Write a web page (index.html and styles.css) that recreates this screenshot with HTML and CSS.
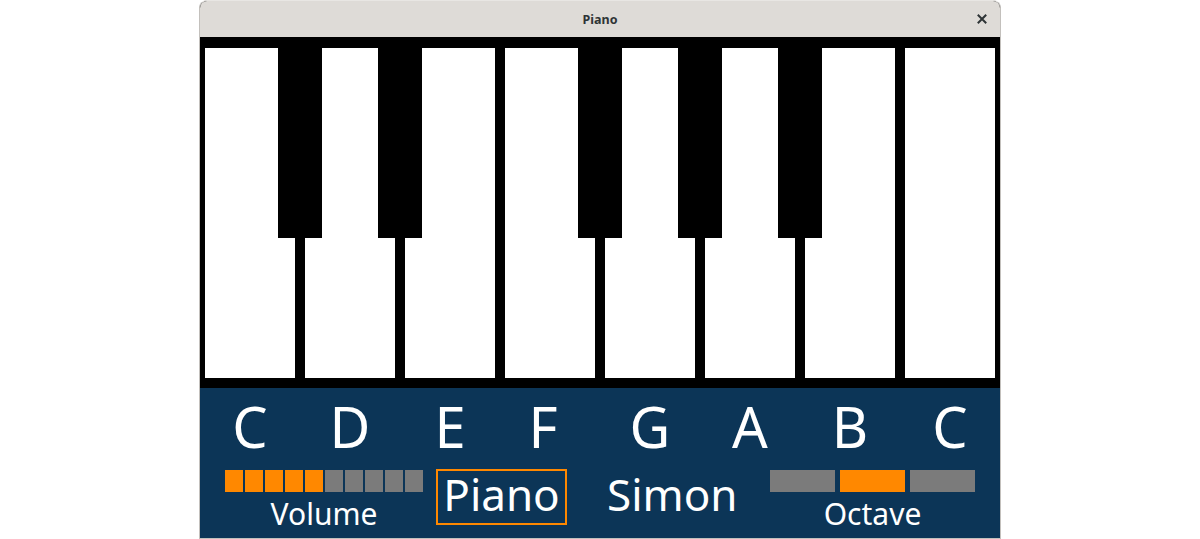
FILE: index.html
```html
<!DOCTYPE html>
<html lang="en">
<head>
<meta charset="utf-8">
<title>Piano</title>
<link rel="stylesheet" href="styles.css">
</head>
<body>
<div class="window">
  <header class="titlebar">
    <span class="title">Piano</span>
    <button class="close" aria-label="Close">
      <svg width="10" height="10" viewBox="0 0 10 10"><path d="M1.5 1.5 L8.5 8.5 M8.5 1.5 L1.5 8.5" stroke="#2e3436" stroke-width="2" stroke-linecap="square"/></svg>
    </button>
  </header>
  <div class="keyboard">
    <div class="white-keys">
      <div class="wkey"></div><div class="wkey"></div><div class="wkey"></div><div class="wkey"></div>
      <div class="wkey"></div><div class="wkey"></div><div class="wkey"></div><div class="wkey"></div>
    </div>
    <div class="bkey" style="left:78px"></div>
    <div class="bkey" style="left:178px"></div>
    <div class="bkey" style="left:378px"></div>
    <div class="bkey" style="left:478px"></div>
    <div class="bkey" style="left:578px"></div>
  </div>
  <div class="panel">
    <div class="notes">
      <span>C</span><span>D</span><span>E</span><span class="narrow">F</span><span>G</span><span>A</span><span>B</span><span>C</span>
    </div>
    <div class="controls">
      <div class="group volume">
        <div class="vbars">
          <i class="on"></i><i class="on"></i><i class="on"></i><i class="on"></i><i class="on"></i>
          <i></i><i></i><i></i><i></i><i></i>
        </div>
        <div class="label">Volume</div>
      </div>
      <div class="mode selected">Piano</div>
      <div class="mode simon">Simon</div>
      <div class="group octave">
        <div class="obars"><i></i><i class="on"></i><i></i></div>
        <div class="label">Octave</div>
      </div>
    </div>
  </div>
</div>
</body>
</html>
```
FILE: styles.css
```css
html, body {
  margin: 0;
  padding: 0;
  background: #ffffff;
}
body {
  display: flex;
  justify-content: center;
  font-family: "Noto Sans", "Open Sans", sans-serif;
}
.window {
  width: 800px;
  border: 1px solid #c3c0bc;
  border-top-color: #e8e6e3;
  border-radius: 8px 8px 0 0;
  overflow: hidden;
  background: #000;
}
.titlebar {
  height: 36px;
  background: #dedbd7;
  display: flex;
  align-items: center;
  justify-content: center;
  position: relative;
}
.title {
  font-weight: bold;
  font-size: 12.5px;
  color: #2e3436;
}
.close {
  position: absolute;
  right: 13px;
  top: 13px;
  width: 10px;
  height: 10px;
  padding: 0;
  border: 0;
  background: none;
  display: flex;
}
.keyboard {
  position: relative;
  background: #000;
  padding: 11px 5px 10px;
}
.white-keys {
  display: flex;
  gap: 10px;
}
.wkey {
  width: 90px;
  height: 330px;
  background: #fff;
}
.bkey {
  position: absolute;
  top: 0;
  width: 44px;
  height: 201px;
  background: #000;
}
.panel {
  height: 150px;
  background: #0c3557;
  box-sizing: border-box;
  padding-top: 10px;
  color: #fff;
}
.notes {
  display: flex;
}
.notes span {
  box-sizing: border-box;
  width: 100px;
  text-align: center;
  font-size: 56px;
  line-height: 56px;
}
.notes span.narrow {
  padding-right: 14px;
}
.controls {
  display: flex;
  align-items: flex-start;
  margin-top: 15px;
}
.group {
  display: flex;
  flex-direction: column;
  align-items: center;
}
.volume {
  margin-left: 25px;
  margin-top: 1px;
}
.vbars, .obars {
  display: flex;
}
.vbars { gap: 2px; }
.obars { gap: 5px; }
.vbars i, .obars i {
  display: block;
  height: 22px;
  background: #7b7b7b;
}
.vbars i { width: 18px; }
.obars i { width: 65px; }
.vbars i.on, .obars i.on { background: #ff8800; }
.label {
  font-size: 30px;
  line-height: 30px;
  margin-top: 7px;
}
.mode {
  box-sizing: border-box;
  width: 131px;
  height: 56px;
  border: 2px solid transparent;
  text-align: center;
  font-size: 44px;
  line-height: 44px;
  padding-top: 1px;
}
.mode.selected {
  margin-left: 13px;
  border-color: #ff8800;
}
.simon {
  margin-left: 38px;
}
.octave {
  margin-left: 34px;
  margin-top: 1px;
}
```
